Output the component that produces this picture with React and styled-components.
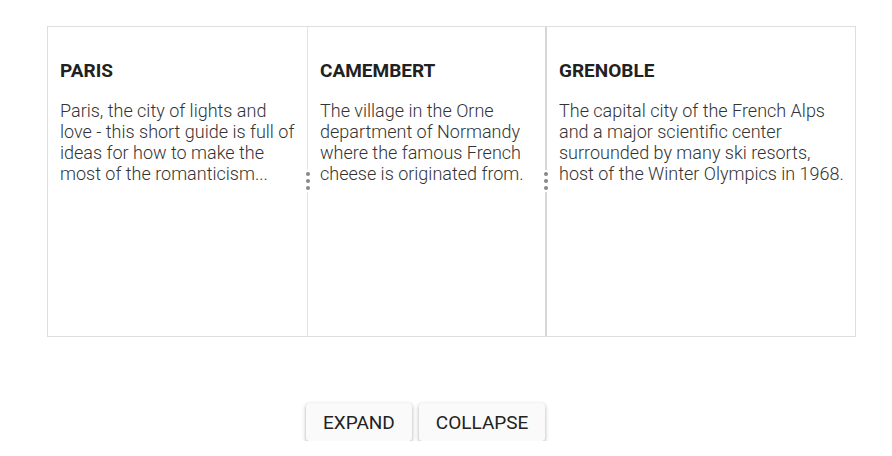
import styled, { createGlobalStyle } from "styled-components"

const GlobalStyle = createGlobalStyle`
  body {
    margin: 0;
    background: #fff;
    font-family: Roboto, "Liberation Sans", sans-serif;
  }
`

const cities = [
  {
    title: "PARIS",
    width: 259,
    text: "Paris, the city of lights and love - this short guide is full of ideas for how to make the most of the romanticism...",
  },
  {
    title: "CAMEMBERT",
    width: 237,
    text: "The village in the Orne department of Normandy where the famous French cheese is originated from.",
  },
  {
    title: "GRENOBLE",
    width: 308,
    text: "The capital city of the French Alps and a major scientific center surrounded by many ski resorts, host of the Winter Olympics in 1968.",
  },
]

function App() {
  return (
    <Page>
      <GlobalStyle />
      <Splitter>
        {cities.map((c, i) => (
          <Group key={c.title}>
            {i > 0 && (
              <Divider $thick={i === 2}>
                <Handle>
                  <Dot />
                  <Dot />
                  <Dot />
                </Handle>
              </Divider>
            )}
            <Pane $width={c.width}>
              <Title>{c.title}</Title>
              <Text>{c.text}</Text>
            </Pane>
          </Group>
        ))}
      </Splitter>
      <Actions>
        <Button>Expand</Button>
        <Button>Collapse</Button>
      </Actions>
    </Page>
  )
}

const Page = styled.div`
  padding-top: 26px;
  display: flex;
  flex-direction: column;
`

const Splitter = styled.div`
  margin-left: 47px;
  width: 807px;
  height: 309px;
  border: 1px solid #dedede;
  display: flex;
`

const Group = styled.div`
  display: flex;
`

const Pane = styled.div`
  width: ${p => p.$width}px;
  box-sizing: border-box;
  padding: 33px 6px 0 12px;
`

const Title = styled.div`
  font-size: 19px;
  line-height: 22px;
  font-weight: 700;
  color: #212121;
`

const Text = styled.p`
  margin: 18px 0 0;
  font-size: 18px;
  line-height: 21px;
  font-weight: 300;
  color: #333;
`

const Divider = styled.div`
  position: relative;
  width: ${p => (p.$thick ? 2 : 1)}px;
  background: ${p => (p.$thick ? "#d6d6d6" : "#e4e4e4")};
`

const Handle = styled.div`
  position: absolute;
  top: 143px;
  left: 50%;
  transform: translateX(-50%);
  display: flex;
  flex-direction: column;
  gap: 3px;
  padding: 2px 0;
  background: #fff;
`

const Dot = styled.span`
  width: 4px;
  height: 4px;
  border-radius: 50%;
  background: #888;
`

const Actions = styled.div`
  display: flex;
  gap: 7px;
  margin: 66px 0 0 306px;
`

const Button = styled.button`
  height: 38px;
  padding: 0 17px;
  border: none;
  border-radius: 3px;
  background: #fafafa;
  color: #222;
  font-family: Roboto, "Liberation Sans", sans-serif;
  font-size: 19px;
  text-transform: uppercase;
  box-shadow: 0 2px 4px rgba(0, 0, 0, 0.3), 0 0 1px rgba(0, 0, 0, 0.15);
  cursor: pointer;
`

export default App
